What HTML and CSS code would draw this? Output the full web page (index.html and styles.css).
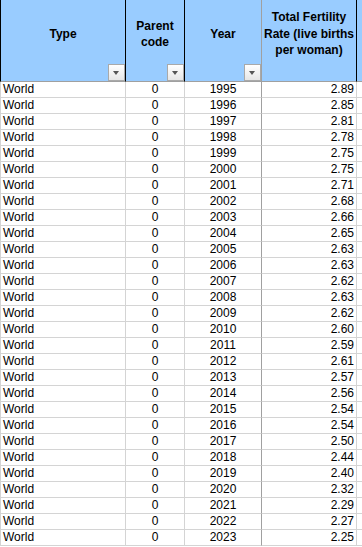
FILE: index.html
```html
<!DOCTYPE html>
<html>
<head>
<meta charset="utf-8">
<link rel="stylesheet" href="styles.css">
</head>
<body>
<div class="sheet">
  <div class="row head">
    <div class="cell c1"><span>Type</span><i class="dd"></i></div>
    <div class="cell c2"><span>Parent<br>code</span><i class="dd"></i></div>
    <div class="cell c3"><span>Year</span><i class="dd"></i></div>
    <div class="cell c4"><span>Total Fertility<br>Rate (live births<br>per woman)</span></div>
    <div class="cell c5"></div>
  </div>
  <div class="row"><div class="cell c1">World</div><div class="cell c2">0</div><div class="cell c3">1995</div><div class="cell c4">2.89</div><div class="cell c5"></div></div>
  <div class="row"><div class="cell c1">World</div><div class="cell c2">0</div><div class="cell c3">1996</div><div class="cell c4">2.85</div><div class="cell c5"></div></div>
  <div class="row"><div class="cell c1">World</div><div class="cell c2">0</div><div class="cell c3">1997</div><div class="cell c4">2.81</div><div class="cell c5"></div></div>
  <div class="row"><div class="cell c1">World</div><div class="cell c2">0</div><div class="cell c3">1998</div><div class="cell c4">2.78</div><div class="cell c5"></div></div>
  <div class="row"><div class="cell c1">World</div><div class="cell c2">0</div><div class="cell c3">1999</div><div class="cell c4">2.75</div><div class="cell c5"></div></div>
  <div class="row"><div class="cell c1">World</div><div class="cell c2">0</div><div class="cell c3">2000</div><div class="cell c4">2.75</div><div class="cell c5"></div></div>
  <div class="row"><div class="cell c1">World</div><div class="cell c2">0</div><div class="cell c3">2001</div><div class="cell c4">2.71</div><div class="cell c5"></div></div>
  <div class="row"><div class="cell c1">World</div><div class="cell c2">0</div><div class="cell c3">2002</div><div class="cell c4">2.68</div><div class="cell c5"></div></div>
  <div class="row"><div class="cell c1">World</div><div class="cell c2">0</div><div class="cell c3">2003</div><div class="cell c4">2.66</div><div class="cell c5"></div></div>
  <div class="row"><div class="cell c1">World</div><div class="cell c2">0</div><div class="cell c3">2004</div><div class="cell c4">2.65</div><div class="cell c5"></div></div>
  <div class="row"><div class="cell c1">World</div><div class="cell c2">0</div><div class="cell c3">2005</div><div class="cell c4">2.63</div><div class="cell c5"></div></div>
  <div class="row"><div class="cell c1">World</div><div class="cell c2">0</div><div class="cell c3">2006</div><div class="cell c4">2.63</div><div class="cell c5"></div></div>
  <div class="row"><div class="cell c1">World</div><div class="cell c2">0</div><div class="cell c3">2007</div><div class="cell c4">2.62</div><div class="cell c5"></div></div>
  <div class="row"><div class="cell c1">World</div><div class="cell c2">0</div><div class="cell c3">2008</div><div class="cell c4">2.63</div><div class="cell c5"></div></div>
  <div class="row"><div class="cell c1">World</div><div class="cell c2">0</div><div class="cell c3">2009</div><div class="cell c4">2.62</div><div class="cell c5"></div></div>
  <div class="row"><div class="cell c1">World</div><div class="cell c2">0</div><div class="cell c3">2010</div><div class="cell c4">2.60</div><div class="cell c5"></div></div>
  <div class="row"><div class="cell c1">World</div><div class="cell c2">0</div><div class="cell c3">2011</div><div class="cell c4">2.59</div><div class="cell c5"></div></div>
  <div class="row"><div class="cell c1">World</div><div class="cell c2">0</div><div class="cell c3">2012</div><div class="cell c4">2.61</div><div class="cell c5"></div></div>
  <div class="row"><div class="cell c1">World</div><div class="cell c2">0</div><div class="cell c3">2013</div><div class="cell c4">2.57</div><div class="cell c5"></div></div>
  <div class="row"><div class="cell c1">World</div><div class="cell c2">0</div><div class="cell c3">2014</div><div class="cell c4">2.56</div><div class="cell c5"></div></div>
  <div class="row"><div class="cell c1">World</div><div class="cell c2">0</div><div class="cell c3">2015</div><div class="cell c4">2.54</div><div class="cell c5"></div></div>
  <div class="row"><div class="cell c1">World</div><div class="cell c2">0</div><div class="cell c3">2016</div><div class="cell c4">2.54</div><div class="cell c5"></div></div>
  <div class="row"><div class="cell c1">World</div><div class="cell c2">0</div><div class="cell c3">2017</div><div class="cell c4">2.50</div><div class="cell c5"></div></div>
  <div class="row"><div class="cell c1">World</div><div class="cell c2">0</div><div class="cell c3">2018</div><div class="cell c4">2.44</div><div class="cell c5"></div></div>
  <div class="row"><div class="cell c1">World</div><div class="cell c2">0</div><div class="cell c3">2019</div><div class="cell c4">2.40</div><div class="cell c5"></div></div>
  <div class="row"><div class="cell c1">World</div><div class="cell c2">0</div><div class="cell c3">2020</div><div class="cell c4">2.32</div><div class="cell c5"></div></div>
  <div class="row"><div class="cell c1">World</div><div class="cell c2">0</div><div class="cell c3">2021</div><div class="cell c4">2.29</div><div class="cell c5"></div></div>
  <div class="row"><div class="cell c1">World</div><div class="cell c2">0</div><div class="cell c3">2022</div><div class="cell c4">2.27</div><div class="cell c5"></div></div>
  <div class="row"><div class="cell c1">World</div><div class="cell c2">0</div><div class="cell c3">2023</div><div class="cell c4">2.25</div><div class="cell c5"></div></div>
</div>
</body>
</html>
```

FILE: styles.css
```css
html, body {
  margin: 0;
  padding: 0;
  background: #ffffff;
}
.sheet {
  font-family: "Liberation Sans", Arial, sans-serif;
  font-size: 12px;
  color: #000000;
  width: 362px;
  overflow: hidden;
}
.row {
  display: grid;
  grid-template-columns: 126px 59px 77px 95px 1fr;
  height: 16px;
}
.cell {
  box-sizing: border-box;
  border-bottom: 1px solid #d4d4d4;
  border-right: 1px solid #d4d4d4;
  line-height: 15px;
  padding: 0 2px;
  white-space: nowrap;
  overflow: hidden;
}
.c1 { border-left: 1px solid #d4d4d4; text-align: left; }
.c2 { text-align: center; }
.c3 { text-align: center; border-right-color: #a0a0a0; }
.c4 { text-align: right; }
.c5 { border-right: none; }

.row.head {
  height: 82px;
}
.head .cell {
  position: relative;
  background: #99ccff;
  border-bottom: 1px solid #a0a0a0;
  border-right: 1px solid #000000;
  font-weight: bold;
  text-align: center;
  line-height: 16.5px;
  display: flex;
  align-items: center;
  justify-content: center;
  padding: 0 0 13px 0;
}
.head .c1 { border-left: 1px solid #000000; }
.head .c3 { border-right-color: #a0a0a0; }
.head .c5 { border-right: none; }

.dd {
  position: absolute;
  right: 0;
  bottom: 0;
  width: 17px;
  height: 17px;
  box-sizing: border-box;
  border: 1px solid #a9a9a9;
  background: linear-gradient(#ffffff, #e6e6e6);
}
.dd::after {
  content: "";
  position: absolute;
  left: 4px;
  top: 6px;
  width: 0;
  height: 0;
  border-left: 3.5px solid transparent;
  border-right: 3.5px solid transparent;
  border-top: 4px solid #555555;
}
```
